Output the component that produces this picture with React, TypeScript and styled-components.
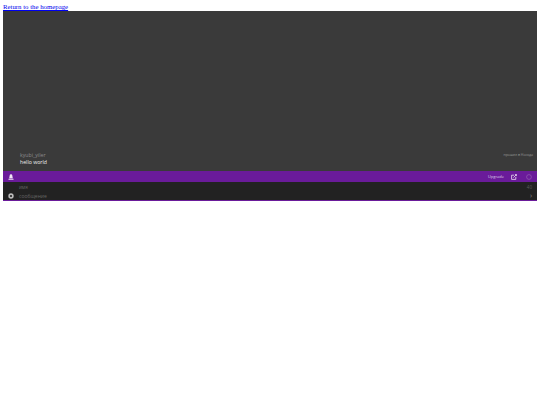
import React from "react";
import styled, { createGlobalStyle } from "styled-components";

const GlobalStyle = createGlobalStyle`
  html, body {
    margin: 0;
    background: #ffffff;
  }
  body {
    padding: 3px 3px 0;
    font-family: "Liberation Serif", serif;
    font-size: 7px;
    line-height: 8px;
  }
`;

const HomeLink = styled.a`
  display: block;
  color: #0000ee;
  text-decoration: underline;
  font-size: 6.8px;
`;

const Chat = styled.div`
  display: flex;
  flex-direction: column;
  width: 534px;
  height: 190px;
  font-family: "Open Sans", sans-serif;
  background: #3a3a3a;
`;

const Messages = styled.div`
  flex: 1;
  display: flex;
  align-items: flex-end;
  justify-content: space-between;
  padding: 0 4px 5px 17px;
`;

const Message = styled.div`
  display: flex;
  flex-direction: column;
  line-height: 7px;
`;

const Author = styled.div`
  font-size: 5.2px;
  color: #8c8c8c;
`;

const Body = styled.div`
  font-size: 5.2px;
  color: #eeeeee;
`;

const Status = styled.div`
  font-size: 3.5px;
  color: #9a9a9a;
  margin-bottom: 7px;
`;

const Toolbar = styled.div`
  display: flex;
  align-items: center;
  height: 11px;
  padding: 0 5px;
  background: #6a1b9a;
  color: #e6d6ee;
`;

const Upgrade = styled.span`
  margin-left: auto;
  font-size: 4px;
  color: #ddd0e6;
`;

const ToolIcon = styled.svg<{ $gap: number }>`
  display: block;
  margin-left: ${(p) => p.$gap}px;
`;

const Composer = styled.div`
  display: flex;
  flex-direction: column;
  height: 19px;
  background: #222222;
  border-bottom: 1px solid #6a1b9a;
  box-sizing: border-box;
`;

const ComposerRow = styled.div`
  display: flex;
  align-items: center;
  height: 9px;
  padding: 0 5px;
  gap: 5px;
`;

const NameField = styled.span`
  margin-left: 11px;
  font-size: 4.500px;
  color: #666666;
`;

const MessageField = styled.span`
  font-size: 5px;
  color: #666666;
`;

const RightMark = styled.span<{ $strong?: boolean }>`
  margin-left: auto;
  font-size: ${(p) => (p.$strong ? 7 : 4.5)}px;
  color: ${(p) => (p.$strong ? "#8a8a8a" : "#5c5c5c")};
`;

export default function App() {
  return (
    <>
      <GlobalStyle />
      <HomeLink href="#">Return to the homepage</HomeLink>
      <Chat>
        <Messages>
          <Message>
            <Author>kyubi_yiler</Author>
            <Body>hello world</Body>
          </Message>
          <Status>прошел в Носкда</Status>
        </Messages>
        <Toolbar>
          <svg width="6" height="6" viewBox="0 0 10 10">
            <path d="M5 0.5a2.2 2.2 0 0 1 2.2 2.2L8 7H2l0.8-4.3A2.2 2.2 0 0 1 5 0.5zM0.8 8h8.4v1.5H0.8z" fill="#f0e6f5" />
          </svg>
          <Upgrade>Upgrade</Upgrade>
          <ToolIcon $gap={7} width="6" height="6" viewBox="0 0 10 10" fill="none" stroke="#efe6f4" strokeWidth="1.3">
            <path d="M5 2H1v7h7V5M4 6l5-5M6.500 1H9v2.500" />
          </ToolIcon>
          <ToolIcon $gap={9} width="6" height="6" viewBox="0 0 10 10" fill="none" stroke="#9a68b5" strokeWidth="1">
            <circle cx="5" cy="5" r="4" />
          </ToolIcon>
        </Toolbar>
        <Composer>
          <ComposerRow>
            <NameField>имя</NameField>
            <RightMark>40</RightMark>
          </ComposerRow>
          <ComposerRow>
            <svg width="6" height="6" viewBox="0 0 10 10">
              <circle cx="5" cy="5" r="4.500" fill="#bbbbbb" />
              <circle cx="5" cy="5" r="1.800" fill="#222222" />
            </svg>
            <MessageField>сообщение</MessageField>
            <RightMark $strong>›</RightMark>
          </ComposerRow>
        </Composer>
      </Chat>
    </>
  );
}
